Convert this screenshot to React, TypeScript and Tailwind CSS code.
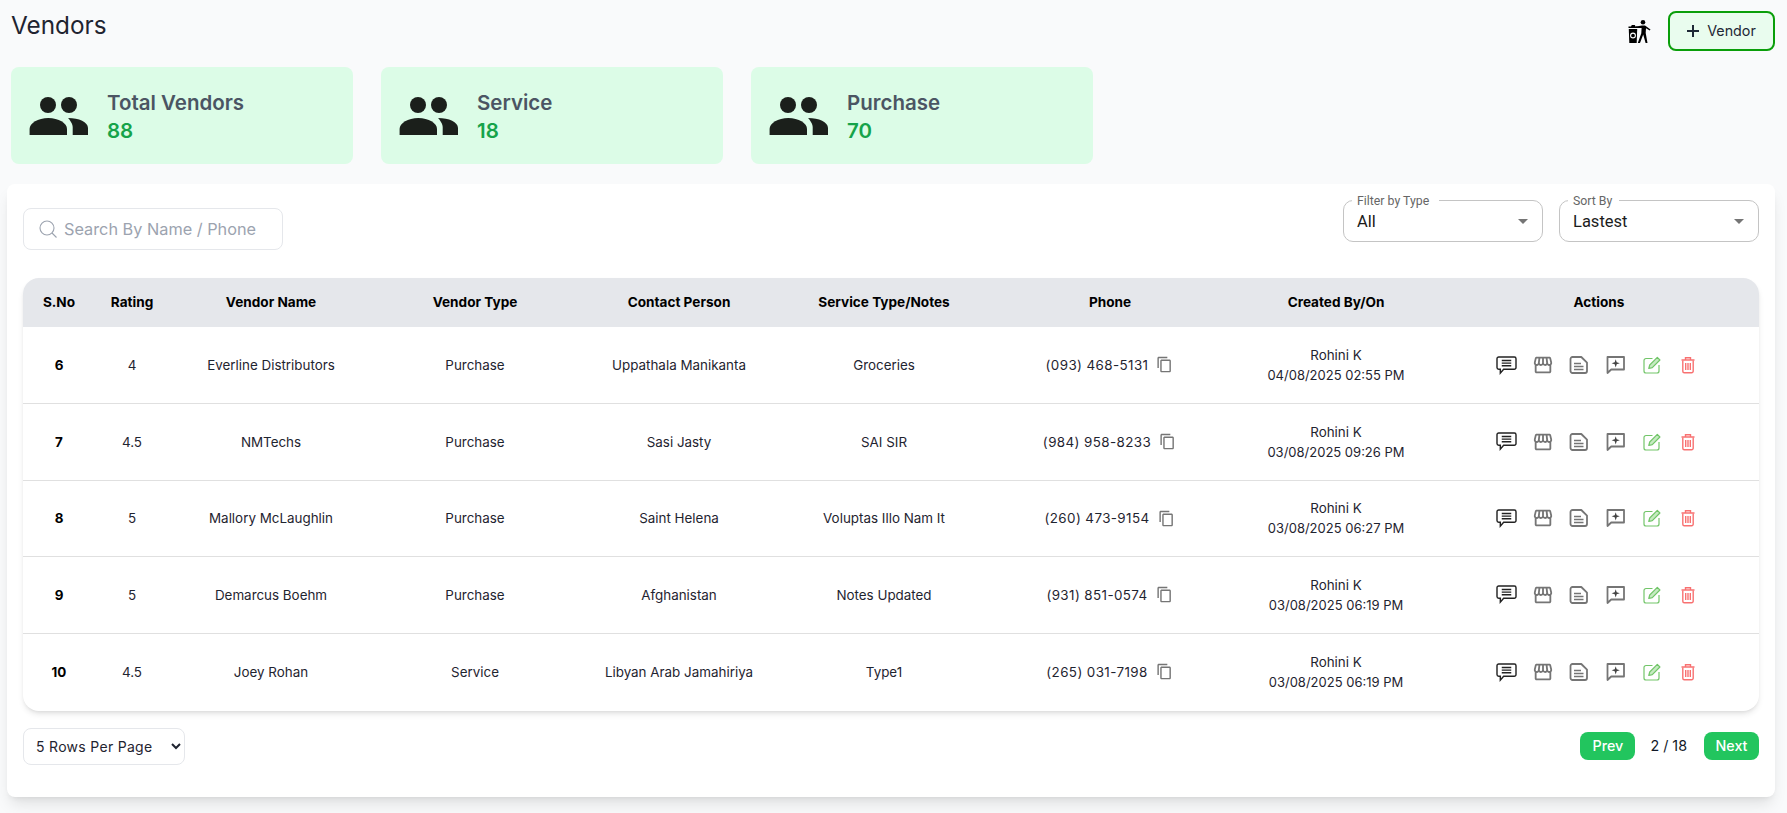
import { MdOutlineContentCopy, MdOutlineStorefront } from 'react-icons/md';

const vendors = [
  { sno: 6, rating: '4', name: 'Everline Distributors', type: 'Purchase', contact: 'Uppathala Manikanta', notes: 'Groceries', phone: '(093) 468-5131', on: '04/08/2025 02:55 PM' },
  { sno: 7, rating: '4.5', name: 'NMTechs', type: 'Purchase', contact: 'Sasi Jasty', notes: 'SAI SIR', phone: '(984) 958-8233', on: '03/08/2025 09:26 PM' },
  { sno: 8, rating: '5', name: 'Mallory McLaughlin', type: 'Purchase', contact: 'Saint Helena', notes: 'Voluptas Illo Nam It', phone: '(260) 473-9154', on: '03/08/2025 06:27 PM' },
  { sno: 9, rating: '5', name: 'Demarcus Boehm', type: 'Purchase', contact: 'Afghanistan', notes: 'Notes Updated', phone: '(931) 851-0574', on: '03/08/2025 06:19 PM' },
  { sno: 10, rating: '4.5', name: 'Joey Rohan', type: 'Service', contact: 'Libyan Arab Jamahiriya', notes: 'Type1', phone: '(265) 031-7198', on: '03/08/2025 06:19 PM' },
];

const stats = [
  { label: 'Total Vendors', value: 88 },
  { label: 'Service', value: 18 },
  { label: 'Purchase', value: 70 },
];

function PeopleIcon() {
  return (
    <svg viewBox="0 0 60 40" className="w-[60px] h-[40px] text-[#1b1f1b]" fill="currentColor">
      <circle cx="19" cy="8" r="8" />
      <circle cx="40" cy="8" r="8" />
      <path d="M.6 38v-6C.6 26 9 21 19.300 21S38 26 38 32v6z" />
      <path d="M39 21c11 0 20 4 20 10v7H43.700v-8c0-3-2.700-7-4.700-9z" />
    </svg>
  );
}

function LitterIcon() {
  return (
    <svg viewBox="0 0 24 23" className="w-6 h-[23px] text-black" fill="currentColor">
      <path d="M3 6.500 3.800 5h3l.7 1.500H9.500V8H.5V6.500z" />
      <path d="M.8 9h8.400l-.5 14H1.300z" />
      <circle cx="5" cy="15.500" r="2.400" fill="none" stroke="#fff" strokeWidth="1.100" />
      <circle cx="15" cy="2.300" r="2.300" />
      <path d="M8 6.500 14 5.500h3l5.500 4-.8 1-3.700-2.300-.3 4.800 1.800 10h-1.900l-2.400-8.500-3.200 8.500H9.800l3.500-9.800.3-5.200-5.300 0z" />
    </svg>
  );
}

function ChatIcon() {
  return (
    <svg viewBox="0 0 22 20" className="w-[21px] h-[19px]" fill="none" stroke="#222" strokeWidth="1.500">
      <path d="M2.800 1h16.400A1.800 1.800 0 0 1 21 2.800v9.400a1.800 1.800 0 0 1-1.800 1.800H8l-3.500 4v-4H2.800A1.800 1.800 0 0 1 1 12.200V2.800A1.800 1.800 0 0 1 2.800 1z" />
      <path d="M6 4.800h10M6 7.500h10M6 10.200h10" />
    </svg>
  );
}

function DocIcon() {
  return (
    <svg viewBox="0 0 22 22" className="w-[22px] h-[22px]" fill="none" stroke="#757575" strokeWidth="1.800">
      <path d="M3.500 3h8.800L18 8.700V17a2 2 0 0 1-2 2H3.500a2 2 0 0 1-2-2V5a2 2 0 0 1 2-2z" strokeLinejoin="round" />
      <path d="M5 9.500h7M5 12.500h9.500M5 15.500h9.500" strokeWidth="1.500" />
    </svg>
  );
}

function AddCommentIcon() {
  return (
    <svg viewBox="0 0 22 22" className="w-[22px] h-[22px]" fill="none" stroke="#757575" strokeWidth="1.800">
      <path d="M1.500 3h16.500v12.500H5.200L1.500 19z" strokeLinejoin="round" />
      <path d="M9.700 5.200l1 3.100 3.100 1-3.100 1-1 3.100-1-3.100-3.100-1 3.100-1z" fill="#444" stroke="none" />
    </svg>
  );
}

function EditIcon() {
  return (
    <svg viewBox="0 0 18 18" className="w-[18px] h-[18px]" fill="none" stroke="#72c569" strokeWidth="1.200">
      <path d="M9.500 2.500H3a2 2 0 0 0-2 2V15a2 2 0 0 0 2 2h11a2 2 0 0 0 2-2V9" />
      <path d="M5.800 12.500l.9-3.500L14.300 1.400l2.600 2.600-7.600 7.600z" strokeLinejoin="round" fill="#c5ebc1" />
    </svg>
  );
}

function TrashIcon() {
  return (
    <svg viewBox="0 0 16 18" className="w-[16px] h-[18px]" fill="none" stroke="#f87171" strokeWidth="1.400">
      <path d="M1.500 4h13M5.500 3.500V1.800h5v1.700" />
      <path d="M2.800 4.500v10.700a1.500 1.500 0 0 0 1.500 1.500h7.400a1.500 1.500 0 0 0 1.500-1.500V4.500" />
      <path d="M5.700 7v7M8 7v7M10.300 7v7" />
    </svg>
  );
}

function Caret() {
  return (
    <svg viewBox="0 0 24 24" className="w-6 h-6 text-[#757575]" fill="currentColor">
      <path d="M7 10l5 5 5-5z" />
    </svg>
  );
}

function OutlinedSelect({ label, value, gap }: { label: string; value: string; gap: string }) {
  return (
    <div className="relative w-[200px] h-[42px] rounded-[10px] border border-[#c4c4c4] flex items-center justify-between pl-[13px] pr-[7px] font-['Roboto',sans-serif] text-[16.500px] text-[#1c1c1c]">
      <span className={`absolute left-[8px] -top-[7px] bg-white px-[5px] text-[12.300px] leading-[15px] text-[#666] ${gap}`}>{label}</span>
      <span className="pt-[2px]">{value}</span>
      <Caret />
    </div>
  );
}

function Th({ children, w }: { children: string; w: string }) {
  return <th className={`${w} font-bold text-[13.600px] text-black text-center`}>{children}</th>;
}

export default function App() {
  return (
    <div className="min-h-screen bg-[#f9fafb] font-['Inter',sans-serif] overflow-hidden h-[813px]">
      <div className="flex justify-between pl-[11px] pr-[12px] pt-[11px]">
        <h1 className="text-[24.300px] leading-[28px] text-[#1f2430]">Vendors</h1>
        <div className="flex items-center gap-[16px]">
          <LitterIcon />
          <button className="w-[107px] h-[40px] rounded-[8px] border-2 border-[#0a9e0a] bg-[#e9fcee] flex items-center justify-center gap-[8px] text-[14.300px] text-[#1f2937]">
            <svg viewBox="0 0 12 12" className="w-[12px] h-[12px]" fill="none" stroke="#1f2937" strokeWidth="2">
              <path d="M6 0v12M0 6h12" />
            </svg>
            Vendor
          </button>
        </div>
      </div>

      <div className="flex gap-[28px] pl-[11px] mt-[16px]">
        {stats.map((s) => (
          <div key={s.label} className="w-[342px] h-[97px] rounded-[8px] bg-[#dcfce7] flex items-start pl-[18px] pt-[21.500px] gap-[18px]">
            <div className="pt-[8.500px]"><PeopleIcon /></div>
            <div>
              <div className="text-[20.500px] leading-[28px] font-semibold text-[#4b5563]">{s.label}</div>
              <div className="text-[20.500px] leading-[28px] font-semibold text-[#16a34a]">{s.value}</div>
            </div>
          </div>
        ))}
      </div>

      <div className="ml-[7px] mr-[12px] mt-[20px] h-[613px] bg-white rounded-[8px] shadow-lg px-[16px] pt-[16px]">
        <div className="flex justify-between items-start">
          <div className="mt-[8px] w-[260px] h-[42px] rounded-[8px] border border-[#e5e7eb] flex items-center pl-[14px] gap-[6px] text-[16.300px] text-[#9ca3af]">
            <svg viewBox="0 0 20 20" className="w-[20px] h-[20px]" fill="none" stroke="#9ca3af" strokeWidth="1.100">
              <circle cx="9" cy="9" r="7" />
              <path d="M14 14l4.500 4.500" />
            </svg>
            <span>Search By Name / Phone</span>
          </div>
          <div className="flex gap-[16px]">
            <OutlinedSelect label="Filter by Type" value="All" gap="pr-[10px]" />
            <OutlinedSelect label="Sort By" value="Lastest" gap="pr-[7px]" />
          </div>
        </div>

        <div className="mt-[28px] rounded-[16px] shadow-md overflow-hidden">
          <table className="w-full table-fixed border-collapse">
            <thead>
              <tr className="h-[49px] bg-[#e5e7eb]">
                <Th w="w-[72px]">S.No</Th>
                <Th w="w-[74px]">Rating</Th>
                <Th w="w-[204px]">Vendor Name</Th>
                <Th w="w-[204px]">Vendor Type</Th>
                <Th w="w-[204px]">Contact Person</Th>
                <Th w="w-[206px]">Service Type/Notes</Th>
                <Th w="w-[246px]">Phone</Th>
                <Th w="w-[206px]">Created By/On</Th>
                <Th w="w-[320px]">Actions</Th>
              </tr>
            </thead>
            <tbody>
              {vendors.map((v, i) => (
                <tr key={v.sno} className={`text-center text-[13.400px] text-[#1f2430] ${i < vendors.length - 1 ? 'h-[76.500px] border-b border-[#e0e0e0]' : 'h-[77.500px]'}`}>
                  <td className="font-bold text-black">{v.sno}</td>
                  <td>{v.rating}</td>
                  <td>{v.name}</td>
                  <td>{v.type}</td>
                  <td>{v.contact}</td>
                  <td>{v.notes}</td>
                  <td>
                    <div className="flex items-center justify-center gap-[8px] tracking-[0.4px] pr-[1px]">
                      {v.phone}
                      <MdOutlineContentCopy className="w-[17px] h-[17px] text-[#757575]" />
                    </div>
                  </td>
                  <td className="leading-[20px]">
                    <div>Rohini K</div>
                    <div className="text-[13px]">{v.on}</div>
                  </td>
                  <td>
                    <div className="flex items-center pl-[57px] gap-[15px]">
                      <ChatIcon />
                      <MdOutlineStorefront className="w-[22px] h-[22px] text-[#757575]" />
                      <DocIcon />
                      <AddCommentIcon />
                      <EditIcon />
                      <div className="ml-[4px]"><TrashIcon /></div>
                    </div>
                  </td>
                </tr>
              ))}
            </tbody>
          </table>
        </div>

        <div className="flex justify-between items-center mt-[17px]">
          <select className="w-[162px] h-[37px] rounded-[8px] border border-[#e5e7eb] pl-[8px] text-[14px] text-[#1f2430] tracking-[0.3px]">
            <option>5 Rows Per Page</option>
          </select>
          <div className="flex items-center gap-[15px] text-[14.300px]">
            <button className="w-[55px] h-[28px] rounded-[8px] bg-[#22c55e] text-white font-medium">Prev</button>
            <span className="text-[#111827] mr-[2px]">2 / 18</span>
            <button className="w-[55px] h-[28px] rounded-[8px] bg-[#22c55e] text-white font-medium">Next</button>
          </div>
        </div>
      </div>
    </div>
  );
}
